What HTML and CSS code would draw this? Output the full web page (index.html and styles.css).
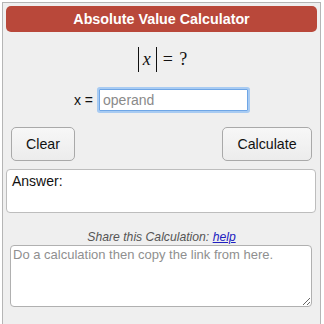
FILE: index.html
```html
<!DOCTYPE html>
<html>
<head>
<meta charset="utf-8">
<link rel="stylesheet" href="styles.css">
</head>
<body>
<div class="calc">
  <div class="header">Absolute Value Calculator</div>
  <div class="formula">
    <span class="bar"></span><span class="var">x</span><span class="bar"></span><span class="rest">= ?</span>
  </div>
  <div class="input-row">
    <label class="lbl" for="op">x =</label>
    <input id="op" class="operand" type="text" placeholder="operand">
  </div>
  <div class="buttons">
    <button class="btn btn-clear">Clear</button>
    <button class="btn btn-calc">Calculate</button>
  </div>
  <div class="answer">Answer:</div>
  <div class="share">Share this Calculation: <a href="#" class="help">help</a></div>
  <div class="share-box">
    <textarea class="link" placeholder="Do a calculation then copy the link from here."></textarea>
  </div>
</div>
</body>
</html>
```
FILE: styles.css
```css
html, body {
  margin: 0;
  padding: 0;
  background: #ffffff;
  overflow: hidden;
}
body {
  padding: 2px 3px 0 2px;
  font-family: "Liberation Sans", Arial, sans-serif;
  color: #111;
}
.calc {
  border: 1px solid #b5b5b5;
  border-bottom: 0;
  background: #efefef;
  padding: 3px 3px 0 3px;
  height: 322px;
  box-sizing: border-box;
}
.header {
  background: #b9483a;
  color: #fff;
  font-weight: bold;
  font-size: 14.3px;
  text-align: center;
  height: 26px;
  line-height: 26px;
  border-radius: 5px;
}
.formula {
  display: flex;
  justify-content: center;
  align-items: center;
  margin-top: 15px;
  height: 25px;
  font-family: "Liberation Serif", "Times New Roman", serif;
  font-size: 18px;
  color: #111;
  padding-left: 2px;
}
.bar {
  display: inline-block;
  width: 0;
  height: 25px;
  border-left: 1px solid #111;
}
.var {
  font-style: italic;
  padding: 0 5px 0 4px;
}
.rest {
  padding-left: 6px;
  word-spacing: 2px;
}
.input-row {
  display: flex;
  justify-content: center;
  align-items: center;
  margin-top: 17px;
  padding-right: 1px;
}
.lbl {
  font-size: 14px;
  color: #111;
  margin-right: 6px;
}
.operand {
  width: 149px;
  height: 22px;
  box-sizing: border-box;
  border: 1px solid #6fa6e6;
  box-shadow: 0 0 0 2px #a8cbf2;
  border-radius: 1px;
  font-family: "Liberation Sans", Arial, sans-serif;
  font-size: 14px;
  padding: 0 3px;
  margin: 0;
  outline: none;
  background: #fff;
}
.operand::placeholder {
  color: #8a8a8a;
}
.buttons {
  display: flex;
  justify-content: space-between;
  margin-top: 16px;
  padding: 0 5px 0 5px;
}
.btn {
  height: 34px;
  box-sizing: border-box;
  border: 1px solid #a9a9a9;
  border-radius: 5px;
  background: linear-gradient(#f7f7f7, #ececec);
  font-family: "Liberation Sans", Arial, sans-serif;
  font-size: 14.2px;
  color: #111;
  padding: 0;
  margin: 0;
}
.btn-clear {
  width: 64px;
}
.btn-calc {
  width: 90px;
}
.answer {
  margin-top: 8px;
  margin-right: 1px;
  height: 44px;
  box-sizing: border-box;
  background: #fff;
  border: 1px solid #bdbdbd;
  border-radius: 4px;
  font-size: 14px;
  padding: 3px 5px;
  color: #111;
}
.share {
  margin-top: 16px;
  text-align: center;
  font-size: 12.2px;
  font-style: italic;
  color: #555;
  line-height: 16px;
}
.help {
  color: #2020c0;
  text-decoration: underline;
}
.share-box {
  padding: 0 5px 0 4px;
}
.link {
  display: block;
  width: 100%;
  height: 62px;
  box-sizing: border-box;
  border: 1px solid #b0b0b0;
  border-radius: 4px;
  background: #fff;
  font-family: "Liberation Sans", Arial, sans-serif;
  font-size: 13px;
  padding: 1px 2px;
  margin: 0;
  resize: vertical;
}
.link::placeholder {
  color: #8f8f8f;
}
```
